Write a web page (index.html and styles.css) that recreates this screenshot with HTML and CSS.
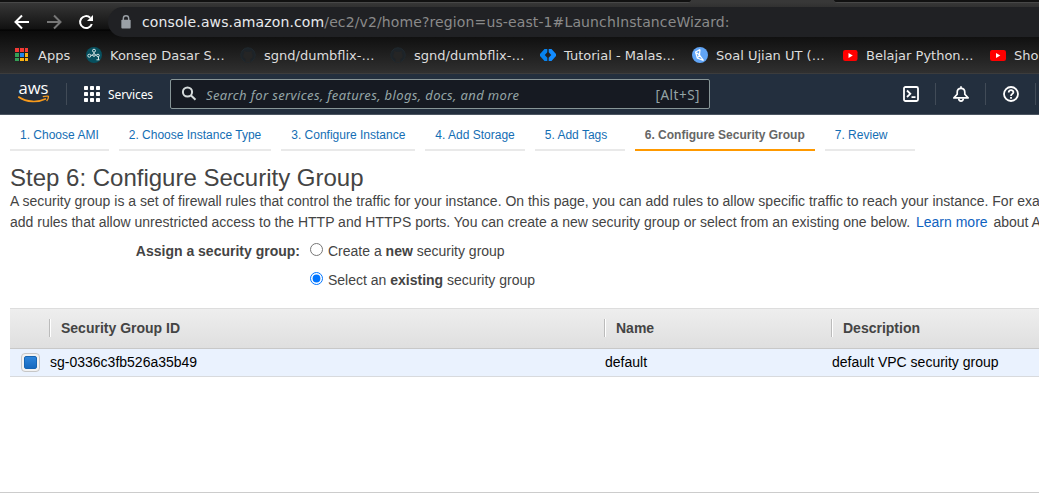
FILE: index.html
```html
<!DOCTYPE html>
<html lang="en">
<head>
<meta charset="utf-8">
<title>Configure Security Group</title>
<link rel="stylesheet" href="styles.css">
</head>
<body>
<header class="browser">
  <div class="tabstrip"><span class="strip-left"></span><span class="strip-right"></span></div>
  <div class="toolbar">
    <svg class="nav-icon" viewBox="0 0 16 16"><path d="M15 8H2M8 1.500 1.500 8 8 14.500" fill="none" stroke="#fff" stroke-width="2"/></svg>
    <svg class="nav-icon" viewBox="0 0 16 16"><path d="M1 8h13M8 1.500 14.500 8 8 14.500" fill="none" stroke="#777" stroke-width="2"/></svg>
    <svg class="nav-icon" viewBox="0 0 16 16"><path d="M13.800 10A6 6 0 1 1 12.200 3.700" fill="none" stroke="#fff" stroke-width="2"/><path d="M15 1v6H9z" fill="#fff"/></svg>
    <div class="omnibox">
      <svg class="lock" viewBox="0 0 10 12"><rect x="1" y="4" width="8" height="7.500" rx=".8" fill="#9aa0a6"/><path d="M2.700 5V3a2.300 2.300 0 0 1 4.600 0v2" fill="none" stroke="#9aa0a6" stroke-width="1.200"/></svg>
      <span class="url"><span class="host">console.aws.amazon.com</span>/ec2/v2/home?region=us-east-1#LaunchInstanceWizard:</span>
    </div>
  </div>
  <nav class="bookmarks">
    <span class="bm bm-apps"><svg class="fav" viewBox="0 0 16 16"><path d="M1 1h4v4H1zM6 1h4v4H6zM11 1h3v4h-3z" fill="#f33a35"/><path d="M1 6h4v4H1zM1 11h4v3H1z" fill="#34a056"/><path d="M6 6h4v4H6z" fill="#2386ee"/><path d="M11 6h3v4h-3zM6 11h4v3H6zM11 11h3v3h-3z" fill="#fbb212"/><path d="M5.500 0v16M10.500 0v16M0 5.500h16M0 10.500h16" stroke="#202020"/></svg>Apps</span>
    <span class="bm bm-konsep"><svg class="fav" viewBox="0 0 16 16"><circle cx="8" cy="8" r="8" fill="#07505f"/><g fill="none" stroke="#d5e4e4" stroke-width="1"><circle cx="8" cy="3.700" r="1.500"/><circle cx="3.300" cy="8.700" r="1.500"/><circle cx="8" cy="8" r="1.300"/><circle cx="12" cy="8.500" r="1.300"/><path d="M8 5.200v1.500M4.800 8.300h2M9.300 8h1.500M12.500 10v3M10.500 12.800h3"/></g></svg>Konsep Dasar S…</span>
    <span class="bm"><svg class="fav" viewBox="0 0 16 16"><circle cx="8" cy="8" r="7.200" fill="#1d2328" stroke="#20292f"/><path d="M5.500 15v-3C2 10.500 3.500 7 4.200 6V3.800l2 1h3.600l2-1V6c1.300 2 1.500 5-1.300 6v3z" fill="#252525"/></svg>sgnd/dumbflix-…</span>
    <span class="bm"><svg class="fav" viewBox="0 0 16 16"><circle cx="8" cy="8" r="7.200" fill="#1d2328" stroke="#20292f"/><path d="M5.500 15v-3C2 10.500 3.500 7 4.200 6V3.800l2 1h3.600l2-1V6c1.300 2 1.500 5-1.300 6v3z" fill="#252525"/></svg>sgnd/dumbflix-…</span>
    <span class="bm bm-wide"><svg class="fav" viewBox="0 0 16 16"><path d="M4.500 2h2.800v3.200L4.800 8l2.500 2.800V14H4.500L0 9V7z" fill="#0783ee"/><path d="M11.500 2H8.700v3.200L11.200 8l-2.500 2.800V14h2.800L16 9V7z" fill="#128cff"/></svg>Tutorial - Malas…</span>
    <span class="bm"><svg class="fav" viewBox="0 0 16 16"><circle cx="8" cy="8" r="8" fill="#61a5f6"/><path d="M8 2.500 3.500 5l1.800 6 6.200 2.500M8 2.500 7.500 8l4 5.500M3.500 5l4 3-2 3" fill="none" stroke="#fff" stroke-width="1.200"/></svg>Soal Ujian UT (…</span>
    <span class="bm bm-yt"><svg class="fav" viewBox="0 0 16 16"><rect x="1" y="3" width="14.500" height="11" rx="2.200" fill="#f00"/><path d="M6.500 6v5l4.300-2.500z" fill="#fff"/></svg>Belajar Python…</span>
    <span class="bm bm-last"><svg class="fav" viewBox="0 0 16 16"><rect x="0" y="3" width="16" height="11" rx="2.200" fill="#f00"/><path d="M6 6v5l4.300-2.500z" fill="#fff"/></svg>Sho</span>
  </nav>
</header>
<div class="console-nav">
  <svg class="aws-logo" viewBox="0 0 32 24"><text class="aws-word" x="0.500" y="12" textLength="30" lengthAdjust="spacingAndGlyphs">aws</text><path d="M.3 14.800C9 20.800 20 20.600 28 16.700" fill="none" stroke="#f79a1c" stroke-width="1.700"/><path d="M24.800 14.700c3-.8 5.700-.8 5.700-.1s-.6 3-1.900 4.400" fill="none" stroke="#f79a1c" stroke-width="1.300"/></svg>
  <span class="divider"></span>
  <svg class="grid-icon" viewBox="0 0 16 16" fill="#fff"><rect width="4" height="4" rx=".7"/><rect x="6" width="4" height="4" rx=".7"/><rect x="12" width="4" height="4" rx=".7"/><rect y="6" width="4" height="4" rx=".7"/><rect x="6" y="6" width="4" height="4" rx=".7"/><rect x="12" y="6" width="4" height="4" rx=".7"/><rect y="12" width="4" height="4" rx=".7"/><rect x="6" y="12" width="4" height="4" rx=".7"/><rect x="12" y="12" width="4" height="4" rx=".7"/></svg>
  <span class="services">Services</span>
  <div class="search">
    <svg class="search-icon" viewBox="0 0 16 16" fill="none" stroke="#d5dbdb" stroke-width="2"><circle cx="6.500" cy="6" r="4.600"/><path d="m9.800 9.300 4.700 4.500"/></svg>
    <span class="placeholder">Search for services, features, blogs, docs, and more</span>
    <span class="shortcut">[Alt+S]</span>
  </div>
  <div class="nav-tools">
    <span class="tool"><svg class="tool-icon" viewBox="0 0 16 16" fill="none" stroke="#fff" stroke-width="1.800"><rect x="1" y="1" width="14" height="14" rx="1.500"/><path d="m4 4.500 3.300 3.300L4 11M8.500 11.200h4"/></svg></span>
    <span class="tool"><svg class="tool-icon" viewBox="0 0 16 16" fill="none" stroke="#fff" stroke-width="1.700"><path d="M.9 11.900 4.200 8.300V6.200C4.200 3.700 5.800 2.300 8 2.300s3.800 1.400 3.800 3.900v2.100l3.300 3.600z" stroke-linejoin="round"/><path d="M8 .3v2M5.700 12.500c.2 3.500 4.400 3.500 4.600 0"/></svg></span>
    <span class="tool"><svg class="tool-icon" viewBox="0 0 16 16" fill="none" stroke="#fff" stroke-width="1.800"><circle cx="8" cy="8" r="7"/><path d="M5.700 6.500C5.700 3.300 10.500 3.500 10.400 6.300 10.300 8 8 7.800 8 10M8 11v1.700"/></svg></span>
  </div>
</div>
<main class="page">
  <nav class="steps">
    <a class="step">1. Choose AMI</a>
    <a class="step">2. Choose Instance Type</a>
    <a class="step">3. Configure Instance</a>
    <a class="step">4. Add Storage</a>
    <a class="step">5. Add Tags</a>
    <a class="step active">6. Configure Security Group</a>
    <a class="step">7. Review</a>
  </nav>
  <h1 class="title">Step 6: Configure Security Group</h1>
  <p class="intro">A security group is a set of firewall rules that control the traffic for your instance. On this page, you can add rules to allow specific traffic to reach your instance. For exa<br>add rules that allow unrestricted access to the HTTP and HTTPS ports. You can create a new security group or select from an existing one below. <a class="learn">Learn more</a> about A</p>
  <div class="assign">
    <span class="assign-label">Assign a security group:</span>
    <div class="options">
      <label class="option"><input class="radio" type="radio" name="group"><span>Create a <b>new</b> security group</span></label>
      <label class="option"><input class="radio" type="radio" name="group" checked><span>Select an <b>existing</b> security group</span></label>
    </div>
  </div>
  <section class="grid">
    <div class="row head"><span></span><span class="th">Security Group ID</span><span class="th">Name</span><span class="th">Description</span></div>
    <div class="row data"><span class="check"><span class="check-fill"></span></span><span>sg-0336c3fb526a35b49</span><span>default</span><span>default VPC security group</span></div>
  </section>
</main>
</body>
</html>
```

FILE: styles.css
```css
* { box-sizing: border-box; }
html, body { height: 100%; overflow: hidden; }
body { margin: 0; background: #fff; color: #444; font: 14px/21px "Liberation Sans", Arial, sans-serif; white-space: nowrap; }

.browser { height: 74px; border-bottom: 1px solid #3c3c3c; background: linear-gradient(#383838 2px, #111 29px, #000 30px, #0b0b0b 31px, #303030 73px); font-family: "DejaVu Sans", sans-serif; }
.tabstrip { display: flex; justify-content: space-between; height: 3px; }
.strip-left, .strip-right { background: #111; border-bottom: 1px solid #484848; }
.strip-left { width: 691px; border-radius: 0 0 4px 0; }
.strip-right { width: 205px; border-radius: 0 0 0 4px; }
.toolbar { display: flex; align-items: center; height: 38px; padding-left: 14px; }
.nav-icon { width: 16px; height: 16px; margin-right: 16px; flex: none; }
.omnibox { display: flex; align-items: center; flex: 1; height: 30px; margin-left: -2px; padding-left: 12px; border-radius: 15px 0 0 15px; background: #202124; }
.lock { width: 12px; height: 14px; margin-right: 10px; }
.url { font-size: 14px; letter-spacing: .12px; color: #8a8a8a; }
.host { color: #e8eaed; }
.bookmarks { display: flex; align-items: center; height: 28px; padding-left: 14px; font-size: 13px; line-height: 19px; color: #ddd; }
.bm { display: flex; align-items: center; gap: 8px; width: 150px; flex: none; }
.bm-apps { width: 72px; }
.bm-konsep { width: 154px; }
.bm-wide { width: 152px; }
.bm-yt { width: 148px; }
.bm-last { width: 49px; }
.fav { width: 16px; height: 16px; flex: none; }

.console-nav { display: flex; align-items: center; height: 41px; padding-left: 18px; background: #232f3e; border-bottom: 1px solid #4b5561; font-family: "Noto Sans", sans-serif; }
.aws-logo { width: 32px; height: 24px; overflow: visible; }
.aws-word { font: 500 17px "Open Sans", sans-serif; fill: #fff; }
.divider { width: 1px; height: 22px; margin: 0 17px 0 16px; background: #414b57; }
.grid-icon { width: 16px; height: 16px; }
.services { width: 62px; margin-left: 8px; font-size: 12px; letter-spacing: -.1px; color: #fff; }
.search { display: flex; align-items: center; width: 540px; height: 30px; padding: 0 9px 0 10px; background: #161a22; border: 1px solid #879596; border-radius: 2px; color: #95a5a6; font-size: 13px; }
.search-icon { width: 16px; height: 16px; margin-right: 9px; }
.placeholder { padding-top: 2px; font-style: italic; letter-spacing: .37px; flex: 1; }
.shortcut { padding-top: 2px; font-size: 13.5px; letter-spacing: .5px; }
.nav-tools { display: flex; margin-left: 176px; }
.tool { display: flex; align-items: center; justify-content: center; width: 50px; height: 22px; border-right: 1px solid #414b57; }
.tool-icon { width: 16px; height: 16px; }

.page { height: 378px; padding: 10px 0 0 10px; border-bottom: 1px solid #ccc; }
.steps { display: flex; gap: 10px; }
.step { min-width: 90px; height: 26px; padding: 0 10px; border-bottom: 2px solid #e9e9e9; color: #146eb4; font-size: 12px; line-height: 20px; }
.step.active { border-color: #f90; color: #666; font-weight: bold; }
.title { margin: 15px 0 0; font-size: 24px; font-weight: normal; line-height: 24px; }
.intro { margin: 1px 0 0; }
.learn { margin: 0 2px; color: #0f62c0; }
.assign { display: flex; gap: 10px; margin-top: 8px; }
.assign-label { width: 290px; text-align: right; font-weight: bold; }
.option { display: flex; height: 21px; margin-bottom: 8px; }
.radio { width: 13px; height: 13px; margin: 2px 5px 0 0; }
.grid { margin-top: 9px; }
.row { display: grid; grid-template-columns: 40px 555px 227px 1fr; align-items: center; }
.head { height: 41px; padding-bottom: 1px; background: linear-gradient(#eee, #dfdfdf); border-top: 1px solid #ddd; border-bottom: 1px solid #c8c8c8; font-weight: bold; }
.th { height: 18px; margin-left: -1px; padding-left: 11px; border-left: 1px solid #bbb; box-shadow: inset 1px 0 #fff; line-height: 18px; }
.data { height: 28px; background: #eaf2fe; border-bottom: 1px solid #d8dadd; color: #000; }
.check { display: flex; width: 19px; height: 19px; margin-left: 11px; padding: 2px; border: 1px solid #c6c6c6; border-radius: 4px; background: #f2f2f2; }
.check-fill { flex: 1; border-radius: 2px; border: 1px solid #1765b2; background: linear-gradient(#2e85db, #176abf); }
```
